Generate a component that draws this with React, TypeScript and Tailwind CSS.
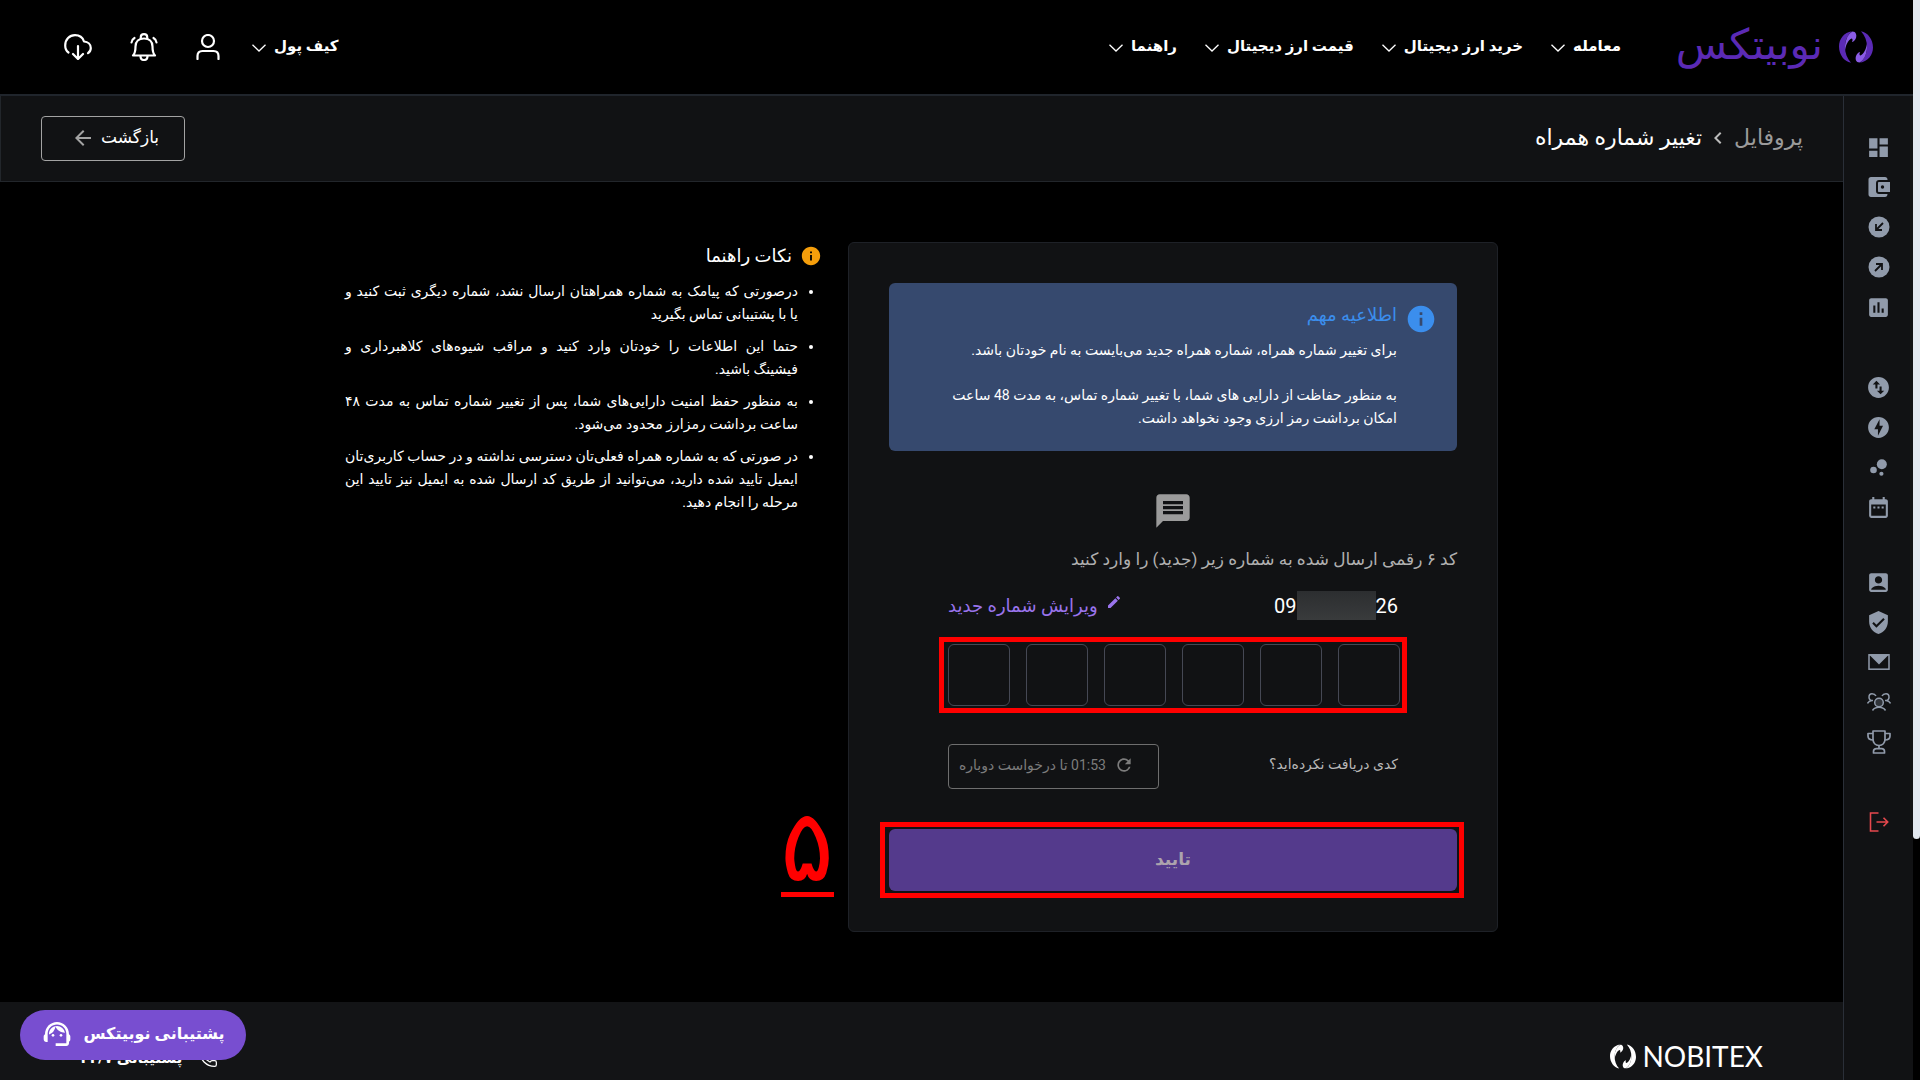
import React from "react";
import { Phone } from "lucide-react";
import {
  MdAccountBox,
  MdArrowBack,
  MdAssessment,
  MdBubbleChart,
  MdChevronLeft,
  MdDashboard,
  MdDateRange,
  MdEdit,
  MdInfo,
  MdMessage,
  MdOfflineBolt,
  MdRefresh,
  MdSupportAgent,
  MdSwapVerticalCircle,
  MdVerifiedUser,
} from "react-icons/md";

const navLinks = ["معامله", "خرید ارز دیجیتال", "قیمت ارز دیجیتال", "راهنما"];

const tips = [
  "درصورتی که پیامک به شماره همراهتان ارسال نشد، شماره دیگری ثبت کنید و یا\u00a0با پشتیبانی تماس بگیرید",
  "حتما این اطلاعات را خودتان وارد کنید و مراقب شیوه‌های کلاهبرداری و فیشینگ\u00a0باشید.",
  "به منظور حفظ امنیت دارایی‌های شما، پس از تغییر شماره تماس به مدت ۴۸ ساعت برداشت رمزارز محدود می‌شود.",
  "در صورتی که به شماره همراه فعلی‌تان دسترسی نداشته و در حساب کاربری‌تان ایمیل تایید شده دارید، می‌توانید از طریق کد ارسال شده به ایمیل نیز تایید این مرحله را انجام دهید.",
];

const LogoMark = ({ className, accent }: { className: string; accent: string }) => (
  <svg viewBox="0 0 34 32" className={className} fill="currentColor" aria-hidden="true">
    <path d="M13 0.3C5 1.5 0 8 0 15.5C0 23.5 5 30.5 12 31.8C8 27.5 6 22 6 16C6 9.5 8.5 4 13 0.3Z" />
    <path d="M21 31.7C29 30.5 34 24 34 16.5C34 8.5 29 1.5 22 0.2C26 4.5 28 10 28 16C28 22.5 25.5 28 21 31.7Z" />
    <path fill={accent} d="M6 19C5.5 11 8 3.5 13.5 0.5C17 0.5 18 4 17 7C16 9.5 14 11 13 11C14 9 13.5 7.5 12.5 7.5C9 9 7 14 6 19Z" />
    <path fill={accent} d="M28 13C28.5 21 26 28.5 20.5 31.5C17 31.5 16 28 17 25C18 22.5 20 21 21 21C20 23 20.5 24.5 21.5 24.5C25 23 27 18 28 13Z" />
  </svg>
);

const Chevron = () => (
  <svg viewBox="0 0 14 8" className="mt-1 h-2 w-3.5" fill="none" stroke="currentColor" strokeWidth="1.3" aria-hidden="true">
    <path d="M0.5 0.7L7 7L13.5 0.7" />
  </svg>
);

const UserIcon = () => (
  <svg viewBox="0 0 24 26" className="h-[26px] w-6" fill="none" stroke="currentColor" strokeWidth="2.2" strokeLinecap="round">
    <circle cx="12" cy="7" r="6" />
    <path d="M1.5 25V22C1.5 19 3.5 17 6.5 17H17.5C20.5 17 22.5 19 22.5 22V25" />
  </svg>
);

const BellIcon = () => (
  <svg viewBox="0 0 28 28" className="size-7" fill="none" stroke="currentColor" strokeWidth="2.2" strokeLinecap="round" strokeLinejoin="round">
    <path d="M3 22.5C5.5 20 5.5 17 5.5 13.5C5.5 8.5 9 5.5 14 5.5C19 5.5 22.5 8.5 22.5 13.5C22.5 17 22.5 20 25 22.5Z" />
    <path d="M10.8 5.5V4C10.8 2.2 12.2 1.2 14 1.2C15.8 1.2 17.2 2.2 17.2 4V5.5" />
    <path d="M10.5 23C10.5 25.5 12 27 14 27C16 27 17.5 25.5 17.5 23" />
    <path d="M1.5 9.5C1.7 7.5 2.7 6 4.5 5M26.5 9.5C26.3 7.5 25.3 6 23.5 5" />
  </svg>
);

const CloudIcon = () => (
  <svg viewBox="0 0 28 26" className="h-[26px] w-7" fill="none" stroke="currentColor" strokeWidth="2.2" strokeLinecap="round" strokeLinejoin="round">
    <path d="M4.5 18.5C2.3 17 1.2 14.7 1.2 11.5C1.2 5.5 5.5 1.2 11 1.2C15.5 1.2 18.8 3.8 20 7.5C24 7.8 26.8 10.5 26.8 14C26.8 16.2 25.8 18 24 19.2" />
    <path d="M14 12V25M9 20L14 25L19 20" />
  </svg>
);

const WalletIcon = () => (
  <svg viewBox="0 0 22 20" className="h-5 w-[22px]" fill="currentColor">
    <path d="M3 0H17C18.5 0 19.5 1 19.5 2.5V3H11C9.3 3 8 4.3 8 6V14C8 15.7 9.3 17 11 17H19.5C19.5 19 18.5 20 17 20H3C1.5 20 0.5 19 0.5 17.5V2.5C0.5 1 1.5 0 3 0Z" />
    <path fillRule="evenodd" d="M11 5H22V15H11C10.3 15 10 14.5 10 14V6C10 5.5 10.3 5 11 5ZM14.5 8.3A1.7 1.7 0 1 0 14.5 11.7A1.7 1.7 0 1 0 14.5 8.3Z" />
  </svg>
);

const ArrowDisc = ({ d }: { d: string }) => (
  <svg viewBox="0 0 22 22" className="size-[22px]" fill="none">
    <circle cx="11" cy="11" r="10.5" fill="currentColor" />
    <path d={d} stroke="#111214" strokeWidth="1.8" />
  </svg>
);

const MailIcon = () => (
  <svg viewBox="0 0 22 16" className="h-4 w-[22px]" fill="none">
    <rect x="1" y="0.8" width="20" height="14.4" stroke="currentColor" strokeWidth="1.5" />
    <path d="M1 0.5H21L11 10.5Z" fill="currentColor" />
  </svg>
);

const PeopleIcon = () => (
  <svg viewBox="0 0 24 18" className="h-[18px] w-6" fill="none" stroke="currentColor" strokeWidth="1.5">
    <circle cx="12" cy="9.5" r="4.3" fill="currentColor" fillOpacity="0.25" />
    <path d="M5.5 17.5C7 15 9 14.3 12 14.3C15 14.3 17 15 18.5 17.5" />
    <path d="M9 3C8 1 6.5 0.8 5 0.8C3 0.8 2 2.5 2 4.2C2 6 3.5 7.5 6 7.5M0.5 10.5C1.5 8.5 3 7.8 5 7.5" />
    <path d="M15 3C16 1 17.5 0.8 19 0.8C21 0.8 22 2.5 22 4.2C22 6 20.5 7.5 18 7.5M23.5 10.5C22.5 8.5 21 7.8 19 7.5" />
  </svg>
);

const TrophyIcon = () => (
  <svg viewBox="0 0 24 24" className="size-6" fill="none" stroke="currentColor" strokeWidth="1.7" strokeLinejoin="round">
    <path d="M6 1H18V9C18 13 15.5 15.5 12 15.5C8.5 15.5 6 13 6 9Z" />
    <path d="M6 3.5H1V6C1 8.5 3 10 6.3 10M18 3.5H23V6C23 8.5 21 10 17.7 10M12 15.5V18.5M6.5 23V21.5C6.5 19.5 8 18.7 9.5 18.7H14.5C16 18.7 17.5 19.5 17.5 21.5V23Z" />
  </svg>
);

const LogoutIcon = () => (
  <svg viewBox="0 0 20 20" className="size-5" fill="none" stroke="currentColor" strokeWidth="1.6">
    <path d="M9.5 1H1.5V19H9.5" />
    <path d="M7.5 10H18.5M14.5 5.8L18.7 10L14.5 14.2" />
  </svg>
);

const sideGroups = [
  {
    className: "",
    items: [
      { label: "داشبورد", icon: <MdDashboard className="size-[25px]" /> },
      { label: "کیف پول", icon: <WalletIcon /> },
      { label: "واریز", icon: <ArrowDisc d="M15 7L8 14M8 8V14H14" /> },
      { label: "برداشت", icon: <ArrowDisc d="M7 15L14 8M8 8H14V14" /> },
      { label: "گزارش", icon: <MdAssessment className="size-[25px]" /> },
    ],
  },
  {
    className: "mt-10",
    items: [
      { label: "تبدیل", icon: <MdSwapVerticalCircle className="size-[25px]" /> },
      { label: "خرید سریع", icon: <MdOfflineBolt className="size-[25px]" /> },
      { label: "استخر", icon: <MdBubbleChart className="size-[25px]" /> },
      { label: "تقویم", icon: <MdDateRange className="size-[25px]" /> },
    ],
  },
  {
    className: "mt-[35px]",
    items: [
      { label: "حساب کاربری", icon: <MdAccountBox className="size-[25px]" /> },
      { label: "امنیت", icon: <MdVerifiedUser className="size-[25px]" /> },
      { label: "پیام‌ها", icon: <MailIcon /> },
      { label: "معرفی دوستان", icon: <PeopleIcon /> },
      { label: "جوایز", icon: <TrophyIcon /> },
    ],
  },
];

const Header = () => (
  <header className="flex h-24 shrink-0 items-center justify-between border-b-2 border-[#20252c] bg-black pr-10 pl-16 text-white">
    <div className="flex items-center">
      <a href="#" className="flex items-center gap-4 text-[#5b2ab5]">
        <LogoMark className="h-8 w-[34px]" accent="#8b5ce6" />
        <span className="w-[146px] pb-1 text-center text-[42px] leading-10 whitespace-nowrap">نوبیتکس</span>
      </a>
      <nav className="mr-14 flex items-center gap-7 pb-0.5">
        {navLinks.map((link) => (
          <a key={link} href="#" className="flex items-center gap-2 text-[15px] leading-6 font-bold whitespace-nowrap">
            {link}
            <Chevron />
          </a>
        ))}
      </nav>
    </div>
    <div className="flex items-center">
      <a href="#" className="flex items-center gap-2 pb-0.5 text-[15px] leading-6 font-bold">
        کیف پول
        <Chevron />
      </a>
      <div className="mr-8 flex items-center gap-[38px]">
        <button aria-label="حساب"><UserIcon /></button>
        <button aria-label="اعلان‌ها"><BellIcon /></button>
        <button aria-label="دانلود"><CloudIcon /></button>
      </div>
    </div>
  </header>
);

const Sidebar = () => (
  <aside className="w-[70px] shrink-0 border-l border-[#2a2f38] bg-[#111214] pt-[31px] text-[#919bab]">
    {sideGroups.map((group, i) => (
      <ul key={i} className={group.className}>
        {group.items.map((item) => (
          <li key={item.label} className="flex h-10 items-center justify-center">
            <a href="#" aria-label={item.label}>{item.icon}</a>
          </li>
        ))}
      </ul>
    ))}
    <button aria-label="خروج" className="mt-10 flex h-10 w-full items-center justify-center text-[#e5484d]">
      <LogoutIcon />
    </button>
  </aside>
);

const SubHeader = () => (
  <div className="flex h-[86px] items-center justify-between border-b border-l border-[#22262b] bg-[#111214] pr-10 pl-10">
    <h1 className="flex items-center gap-1 pb-0.5 text-[22px] leading-8 font-normal text-white">
      <a href="#" className="text-[#9b9b9b]">پروفایل</a>
      <MdChevronLeft className="size-6 text-[#bbbbbb]" />
      تغییر شماره همراه
    </h1>
    <button className="flex h-[45px] w-36 items-center justify-center gap-1.5 rounded-[4px] border border-[#a3a3a3] pb-0.5 pl-1 text-[17px] text-white">
      بازگشت
      <MdArrowBack className="size-6 text-[#a3a3a3]" />
    </button>
  </div>
);

const Frame = () => (
  <div className="pointer-events-none absolute -inset-y-[7px] -right-[7px] -left-[9px] border-[5px] border-[#ff0000]" />
);

const VerifyCard = () => (
  <section className="relative w-[650px] shrink-0 rounded-md border border-[#1e2127] bg-[#111214] p-10">
    <div className="flex min-h-[168px] gap-2 rounded-md bg-[#36496e] pt-5 pr-5 pl-10">
      <MdInfo className="size-8 shrink-0 text-[#3b8eed]" />
      <div className="text-sm leading-[23px] text-white">
        <h2 className="mb-3 text-lg leading-6 text-[#3b8eed]">اطلاعیه مهم</h2>
        <p>برای تغییر شماره همراه، شماره همراه جدید می‌بایست به نام خودتان باشد.</p>
        <p className="mt-[22px]">
          به منظور حفاظت از دارایی های شما، با تغییر شماره تماس، به مدت 48 ساعت
          <br />
          امکان برداشت رمز ارزی وجود نخواهد داشت.
        </p>
      </div>
    </div>
    <MdMessage className="mx-auto mt-10 size-10 text-[#9b9b9b]" />
    <p className="mt-3 text-[17px] leading-8 text-[#b0b0b0]">کد ۶ رقمی ارسال شده به شماره زیر (جدید) را وارد کنید</p>
    <div className="mx-[59px]">
      <div className="mt-4 flex h-[29px] items-center justify-between">
        <span dir="ltr" className="flex items-center text-xl text-white">
          09
          <span className="h-[29px] w-[79px] bg-linear-to-b from-[#2c2e30] to-[#393b3c]" />
          26
        </span>
        <button className="flex items-center gap-2 text-lg text-[#9a74ec]">
          <MdEdit className="mb-2 size-4" />
          ویرایش شماره جدید
        </button>
      </div>
      <div className="relative -mr-0.5 mt-6 flex justify-between">
        {[1, 2, 3, 4, 5, 6].map((n) => (
          <input
            key={n}
            aria-label={`رقم ${n}`}
            maxLength={1}
            className="size-[62px] rounded-md border border-[#454854] bg-transparent text-center text-white"
          />
        ))}
        <Frame />
      </div>
      <div className="mt-[38px] flex justify-between text-sm leading-5">
        <span className="mt-2.5 text-[#b8b8b8]">کدی دریافت نکرده‌اید؟</span>
        <button className="flex h-[45px] w-[211px] items-center justify-end gap-2 rounded-[4px] border border-[#6e6e6e] pb-1 pl-2.5 text-[#7c7c7c]">
          <MdRefresh className="size-5" />
          <span>01:53 تا درخواست دوباره</span>
        </button>
      </div>
    </div>
    <div className="relative mt-10">
      <button className="h-[62px] w-full rounded-md bg-[#543a8c] text-[17px] font-bold text-[#aca3ad]">تایید</button>
      <Frame />
    </div>
    <span className="absolute bottom-[34px] -left-[68px] w-[53px] border-b-[5px] border-[#ff0000] text-center text-[100px] leading-[92px] text-[#ff0000]">
      ۵
    </span>
  </section>
);

const Tips = () => (
  <section className="flex-1 pt-0.5 text-white">
    <h2 className="flex items-center gap-2 text-lg leading-6">
      <MdInfo className="size-[22px] text-[#f59e0b]" />
      نکات راهنما
    </h2>
    <ul className="mr-6 list-disc pt-3 text-justify text-sm leading-[23px]">
      {tips.map((tip) => (
        <li key={tip} className="mb-[9px]">{tip}</li>
      ))}
    </ul>
  </section>
);

const Footer = () => (
  <footer className="flex flex-1 items-start justify-between bg-[#131416] pt-10 pr-20 pl-20 text-white">
    <a href="#" dir="ltr" className="flex items-center gap-1.5 font-[Lato] text-[28px] leading-7">
      <LogoMark className="h-[25px] w-[26px]" accent="#ffffff" />
      NOBITEX
    </a>
    <a href="#" className="mt-1 flex items-center gap-4 text-[15px] leading-6 font-bold">
      <Phone className="size-5" strokeWidth={1.5} />
      پشتیبانی ۲۴/۷
    </a>
  </footer>
);

export default function App() {
  return (
    <div dir="rtl" className="flex h-screen overflow-hidden bg-black font-[Roboto,'DejaVu_Sans',sans-serif]">
      <div className="w-[7px] shrink-0">
        <div className="h-[839px] rounded-b-md bg-[#e2e8f0]" />
      </div>
      <div className="flex flex-1 flex-col">
        <Header />
        <div className="flex flex-1">
          <Sidebar />
          <div className="flex flex-1 flex-col">
            <SubHeader />
            <main className="mx-auto flex w-full max-w-[1153px] gap-[26px] pt-[60px] pb-[70px]">
              <VerifyCard />
              <Tips />
            </main>
            <Footer />
          </div>
        </div>
      </div>
      <button className="fixed bottom-5 left-5 flex h-[50px] w-[226px] items-center justify-center gap-2.5 rounded-full bg-[#784ed0] pb-0.5 text-base font-bold text-white">
        پشتیبانی نوبیتکس
        <MdSupportAgent className="size-8" />
      </button>
    </div>
  );
}
